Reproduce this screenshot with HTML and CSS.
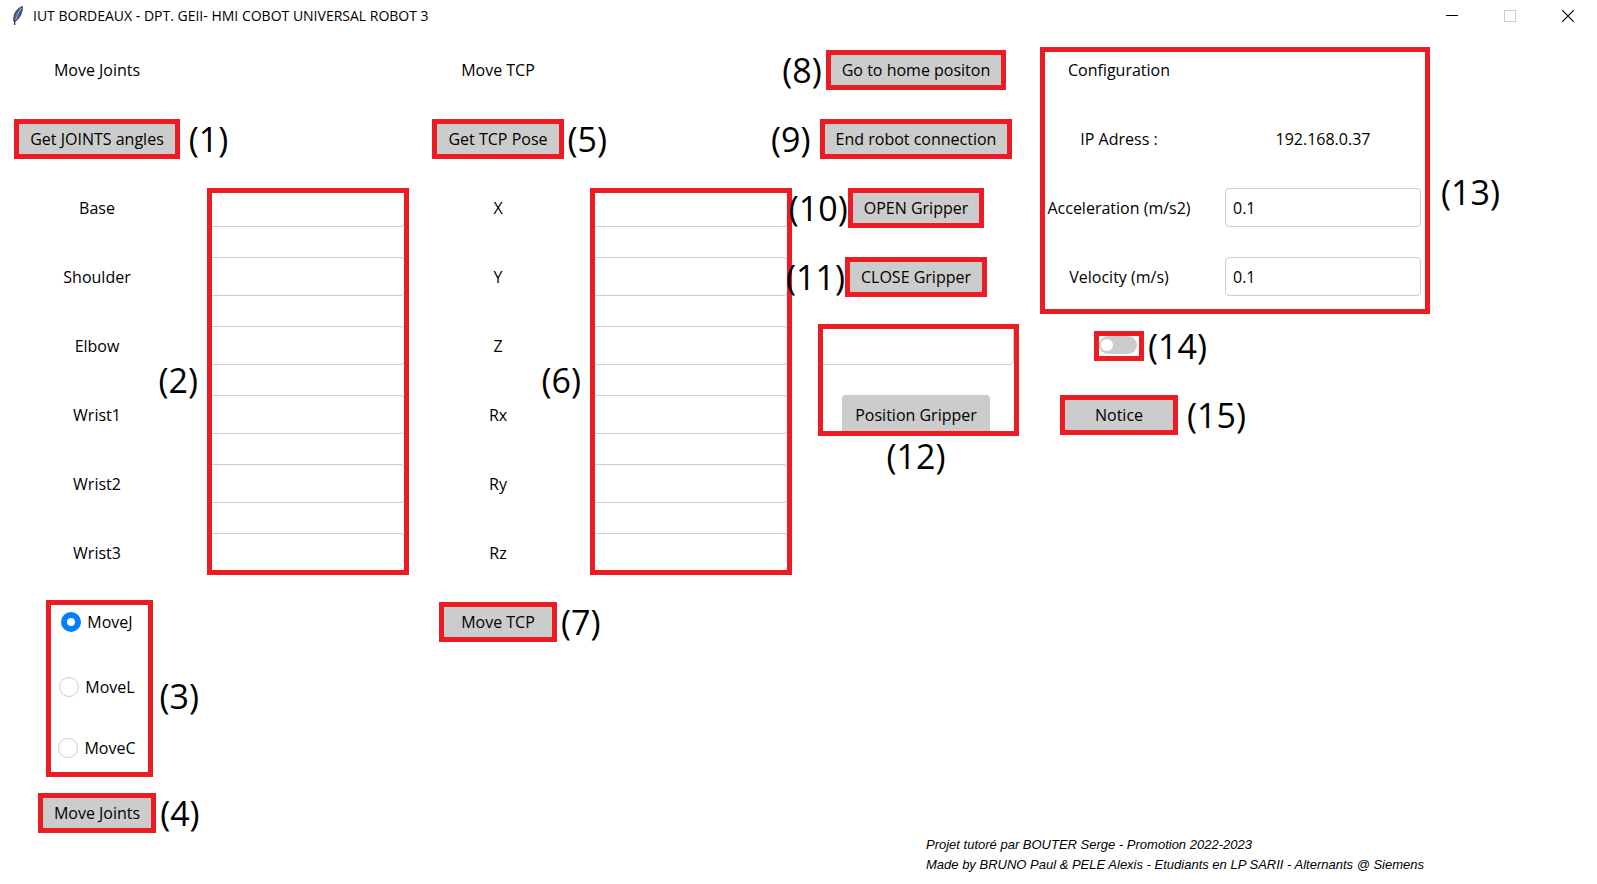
FILE: index.html
```html
<!DOCTYPE html>
<html lang="fr">
<head>
<meta charset="utf-8">
<meta name="viewport" content="width=device-width, initial-scale=1">
<title>IUT BORDEAUX - DPT. GEII- HMI COBOT UNIVERSAL ROBOT 3</title>
<link rel="stylesheet" href="styles.css">
</head>
<body>
<header class="titlebar">
  <svg class="feather" width="12" height="20" viewBox="0 0 12 20" aria-hidden="true">
    <path d="M10.500 0.500C6 2 2.500 6 2 10.500L1.500 14L3 15.500L5 14C8.500 11 10.500 6 10.500 0.500Z" fill="#3f6496" stroke="#2b2f36" stroke-width="0.800"/>
    <path d="M9.500 2C6.500 6 4.500 10 3.500 14.500" stroke="#8fb0d8" stroke-width="1" fill="none"/>
    <path d="M2.500 14L2.800 19" stroke="#222" stroke-width="1.200" fill="none"/>
  </svg>
  <h1 class="title">IUT BORDEAUX - DPT. GEII- HMI COBOT UNIVERSAL ROBOT 3</h1>
  <div class="window-controls">
    <button class="window-button" type="button" aria-label="Minimize"><svg width="12" height="12" viewBox="0 0 12 12"><path d="M0 5.500H12" stroke="#000"/></svg></button>
    <button class="window-button" type="button" aria-label="Maximize" disabled><svg width="12" height="12" viewBox="0 0 12 12"><rect x="0.500" y="0.500" width="11" height="11" fill="none" stroke="#ccc"/></svg></button>
    <button class="window-button" type="button" aria-label="Close"><svg width="12" height="12" viewBox="0 0 12 12"><path d="M0.300 0.300L11.700 11.700M11.700 0.300L0.300 11.700" stroke="#000" stroke-width="1.200"/></svg></button>
  </div>
</header>

<main class="panel">
  <h2 class="heading c1 r1">Move Joints</h2>
  <div class="cell c1 r2"><div class="anchor"><button class="button" type="button">Get JOINTS angles</button><span class="callout right far">(1)</span></div></div>
  <label class="cell c1 r3" for="base">Base</label>
  <label class="cell c1 r4" for="shoulder">Shoulder</label>
  <label class="cell c1 r5" for="elbow">Elbow</label>
  <label class="cell c1 r6" for="wrist1">Wrist1</label>
  <label class="cell c1 r7" for="wrist2">Wrist2</label>
  <label class="cell c1 r8" for="wrist3">Wrist3</label>
  <div class="entries c2">
    <input class="entry" id="base" type="text">
    <input class="entry" id="shoulder" type="text">
    <input class="entry" id="elbow" type="text">
    <input class="entry" id="wrist1" type="text">
    <input class="entry" id="wrist2" type="text">
    <input class="entry" id="wrist3" type="text">
    <span class="callout left far">(2)</span>
  </div>
  <div class="modes">
    <label class="mode"><input class="radio" type="radio" name="mode" checked>MoveJ</label>
    <label class="mode"><input class="radio" type="radio" name="mode">MoveL</label>
    <label class="mode"><input class="radio" type="radio" name="mode">MoveC</label>
    <span class="callout right far low">(3)</span>
  </div>
  <div class="cell c1 r12"><div class="anchor"><button class="button" type="button">Move Joints</button><span class="callout right">(4)</span></div></div>

  <h2 class="heading c3 r1">Move TCP</h2>
  <div class="cell c3 r2"><div class="anchor"><button class="button" type="button">Get TCP Pose</button><span class="callout right">(5)</span></div></div>
  <label class="cell c3 r3" for="x">X</label>
  <label class="cell c3 r4" for="y">Y</label>
  <label class="cell c3 r5" for="z">Z</label>
  <label class="cell c3 r6" for="rx">Rx</label>
  <label class="cell c3 r7" for="ry">Ry</label>
  <label class="cell c3 r8" for="rz">Rz</label>
  <div class="entries c4">
    <input class="entry" id="x" type="text">
    <input class="entry" id="y" type="text">
    <input class="entry" id="z" type="text">
    <input class="entry" id="rx" type="text">
    <input class="entry" id="ry" type="text">
    <input class="entry" id="rz" type="text">
    <span class="callout left far">(6)</span>
  </div>
  <div class="cell c3 r9"><div class="anchor"><button class="button" type="button">Move TCP</button><span class="callout right">(7)</span></div></div>

  <div class="cell c5 r1"><div class="anchor"><button class="button" type="button">Go to home positon</button><span class="callout left">(8)</span></div></div>
  <div class="cell c5 r2"><div class="anchor"><button class="button" type="button">End robot connection</button><span class="callout left far">(9)</span></div></div>
  <div class="cell c5 r3"><div class="anchor"><button class="button" type="button">OPEN Gripper</button><span class="callout left tight">(10)</span></div></div>
  <div class="cell c5 r4"><div class="anchor"><button class="button" type="button">CLOSE Gripper</button><span class="callout left tight">(11)</span></div></div>
  <div class="gripper">
    <input class="entry" type="text" aria-label="Position">
    <button class="button plain" type="button">Position Gripper</button>
    <span class="callout below">(12)</span>
  </div>

  <section class="config">
    <h2 class="heading">Configuration</h2><span></span>
    <span class="cell">IP Adress :</span><span class="cell">192.168.0.37</span>
    <label class="cell" for="acceleration">Acceleration (m/s2)</label>
    <div class="cell"><input class="entry" id="acceleration" type="text" value="0.1"></div>
    <label class="cell" for="velocity">Velocity (m/s)</label>
    <div class="cell"><input class="entry" id="velocity" type="text" value="0.1"></div>
    <span class="callout right far low">(13)</span>
  </section>
  <div class="cell c6 r5"><div class="anchor toggle"><input class="switch" type="checkbox" role="switch" aria-label="Mode"><span class="callout right">(14)</span></div></div>
  <div class="cell c6 r6"><div class="anchor"><button class="button" type="button">Notice</button><span class="callout right far">(15)</span></div></div>

  <footer class="credits">
    <p class="credit">Projet tutoré par BOUTER Serge - Promotion 2022-2023</p>
    <p class="credit">Made by BRUNO Paul &amp; PELE Alexis - Etudiants en LP SARII - Alternants @ Siemens</p>
  </footer>
</main>
</body>
</html>
```
FILE: styles.css
```css
:root {
  --red: #ed1c24;
  --grey: #ccc;
}

* { box-sizing: border-box; }

body {
  margin: 0;
  background: #fff;
  color: #000;
  font: 16px/24px "Open Sans", "Noto Sans", sans-serif;
}

button, input { font: inherit; color: inherit; margin: 0; }

/* Title bar */
.titlebar {
  display: flex;
  align-items: center;
  height: 35px;
  padding: 0 0 3px 12px;
}
.feather { margin-right: 9px; }
.title { margin: 0; font-size: 14px; font-weight: 400; line-height: 20px; }
.window-controls { display: flex; margin-left: auto; }
.window-button {
  display: grid;
  place-items: center;
  width: 58px;
  height: 32px;
  padding: 0;
  border: 0;
  background: none;
}

/* Main grid */
.panel {
  display: grid;
  grid-template-columns:
    minmax(0, 194fr) minmax(0, 228fr) minmax(0, 152fr) minmax(0, 234fr)
    minmax(0, 216fr) minmax(0, 190fr) minmax(0, 218fr) minmax(0, 165fr);
  grid-template-rows: repeat(9, 69px) 61px 61px 69px 28px;
}
.cell, .heading { display: flex; align-items: center; justify-content: center; white-space: nowrap; }
.heading { margin: 0; font-size: 16px; font-weight: 400; }

.c1 { grid-column: 1; }
.c2 { grid-column: 2; }
.c3 { grid-column: 3; }
.c4 { grid-column: 4; }
.c5 { grid-column: 5; }
.c6 { grid-column: 6; }
.r1 { grid-row: 1; }
.r2 { grid-row: 2; }
.r3 { grid-row: 3; }
.r4 { grid-row: 4; }
.r5 { grid-row: 5; }
.r6 { grid-row: 6; }
.r7 { grid-row: 7; }
.r8 { grid-row: 8; }
.r9 { grid-row: 9; }
.r12 { grid-row: 12; }

/* Controls */
.anchor { position: relative; display: flex; }
.button {
  height: 40px;
  min-width: 118px;
  padding: 0 11px;
  border: 5px solid var(--red);
  background: var(--grey);
  white-space: nowrap;
}
.plain { height: 39px; padding: 0 13px; border: 0; border-radius: 4px; }
.entry {
  width: 196px;
  height: 39px;
  padding: 0 7px;
  border: 1px solid var(--grey);
  border-radius: 4px;
  background: #fff;
}

/* Red frames over a group */
.entries::after, .modes::after, .gripper::after, .config::after, .toggle::after {
  content: "";
  position: absolute;
  inset: 0;
  border: 5px solid var(--red);
  pointer-events: none;
}

.entries {
  position: relative;
  grid-row: 3 / 9;
  justify-self: center;
  align-self: center;
  display: grid;
  gap: 30px;
  justify-items: end;
  width: 202px;
  padding-right: 4px;
}
.entries::after { bottom: -3px; }

.modes {
  position: relative;
  grid-area: 9 / 1 / 12 / 2;
  justify-self: center;
  display: grid;
  grid-template-rows: 69px 61px 61px;
  justify-items: center;
  width: 107px;
}
.modes::after { inset: 13px -2px 1px 2px; }
.mode { display: flex; align-items: center; gap: 6px; }
.radio {
  appearance: none;
  width: 20px;
  height: 20px;
  border: 1px solid var(--grey);
  border-radius: 50%;
  background: #fff;
}
.radio:checked { border: 6px solid #007fff; }

.gripper {
  position: relative;
  grid-area: 5 / 5 / 7 / 6;
  justify-self: center;
  align-self: center;
  display: grid;
  gap: 30px;
  justify-items: center;
  width: 201px;
}
.gripper::after { inset: -2px -2px -2px 2px; }

.config {
  position: relative;
  grid-area: 1 / 6 / 5 / 8;
  display: grid;
  grid-template-columns: minmax(0, 190fr) minmax(0, 218fr);
  grid-auto-rows: 69px;
}
.config::after { inset: 12px 2px -3px 16px; }

.toggle { width: 50px; height: 30px; padding: 5px; }
.switch {
  appearance: none;
  display: flex;
  align-items: center;
  width: 38px;
  height: 18px;
  padding: 0 2px;
  border-radius: 9px;
  background: var(--grey);
}
.switch::before {
  content: "";
  width: 12px;
  height: 12px;
  border-radius: 50%;
  background: #fff;
}
.switch:checked { justify-content: flex-end; background: #007fff; }

/* Numbered callouts */
.callout {
  --gap: 4px;
  position: absolute;
  z-index: 1;
  top: 50%;
  transform: translateY(-50%);
  font-size: 34px;
  line-height: 44px;
  white-space: nowrap;
}
.far { --gap: 9px; }
.tight { --gap: 0px; }
.low { top: 57%; }
.right { left: calc(100% + var(--gap)); }
.left { right: calc(100% + var(--gap)); }
.below { top: 100%; left: 50%; transform: translateX(-50%); }

/* Credits */
.credits {
  grid-area: 12 / 5 / 14 / 9;
  align-self: end;
  padding-left: 118px;
  font: italic 13px/20px "Liberation Sans", Arial, sans-serif;
}
.credit { margin: 0; white-space: nowrap; }
```
